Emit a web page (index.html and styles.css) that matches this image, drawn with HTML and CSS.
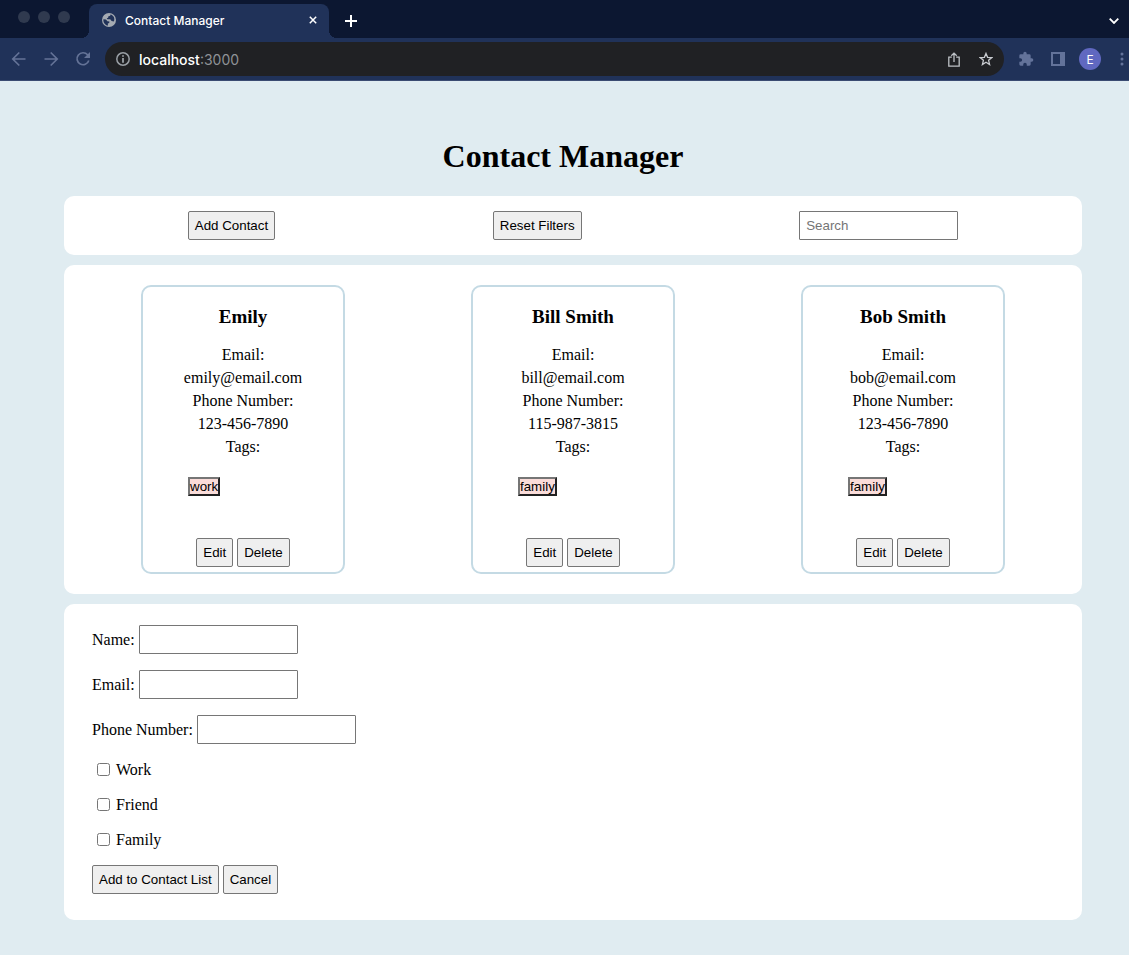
FILE: index.html
```html
<!DOCTYPE html>
<html lang="en">
<head>
<meta charset="utf-8">
<title>Contact Manager</title>
<link rel="stylesheet" href="styles.css">
</head>
<body>
<header class="browser">
  <div class="tabstrip">
    <div class="lights"><span class="light"></span><span class="light"></span><span class="light"></span></div>
    <div class="tab">
      <svg class="favicon" viewBox="0 0 14 14" width="14" height="14" aria-hidden="true"><circle cx="7" cy="7" r="7" fill="#a5abb3"/><path d="M1.4 6.2 L4 6.6 L5.4 8.2 L7.4 8.4 L7.2 10 L5.8 10.6 L6 12.6 C3.2 12.2 1 9.7 1.4 6.2Z M8.4 1.5 L8.2 2.8 L6.2 3.4 L6.2 4.8 L4.8 5.2 L5.4 6.2 L8.2 6.2 L9.6 8 L11.8 8.6 C13.300 5.400 11.600 2.200 8.400 1.500Z" fill="#203259"/></svg>
      <span class="tab-title">Contact Manager</span>
      <button class="icon" aria-label="Close tab"><svg width="8" height="8" viewBox="0 0 8 8"><path d="M.8 .8 7.2 7.2 M7.2 .8 .8 7.2" stroke="#fff" stroke-width="1.5"/></svg></button>
    </div>
    <button class="icon new-tab" aria-label="New tab"><svg width="12" height="12" viewBox="0 0 12 12"><path d="M6 0V12 M0 6H12" stroke="#fff" stroke-width="2"/></svg></button>
    <button class="icon tab-search" aria-label="Search tabs"><svg width="10" height="6" viewBox="0 0 10 6"><path d="M.7 .7 5 5 9.3 .7" fill="none" stroke="#fff" stroke-width="1.8"/></svg></button>
  </div>
  <div class="toolbar">
    <nav class="history">
      <button class="icon" aria-label="Back"><svg width="16" height="16" viewBox="0 0 16 16"><path d="M14.5 8H2 M8.3 1.5 1.8 8 8.3 14.5" fill="none" stroke="#647397" stroke-width="1.7"/></svg></button>
      <button class="icon" aria-label="Forward"><svg width="16" height="16" viewBox="0 0 16 16"><path d="M1.5 8H14 M7.7 1.5 14.2 8 7.7 14.5" fill="none" stroke="#647397" stroke-width="1.7"/></svg></button>
      <button class="icon" aria-label="Reload"><svg width="16" height="16" viewBox="0 0 16 16"><path d="M13.8 9.5A6 6 0 1 1 12.6 3.8L14 5.2" fill="none" stroke="#647397" stroke-width="1.7"/><path d="M15 1V7H9Z" fill="#647397"/></svg></button>
    </nav>
    <div class="omnibox">
      <svg width="14" height="14" viewBox="0 0 14 14" aria-hidden="true"><circle cx="7" cy="7" r="6.2" fill="none" stroke="#9aa0a6" stroke-width="1.5"/><path d="M7 3.2V4.8 M7 6V10.8" stroke="#9aa0a6" stroke-width="1.8"/></svg>
      <span class="url"><span class="host">localhost</span>:3000</span>
      <button class="icon" aria-label="Share"><svg width="12" height="15" viewBox="0 0 12 15"><path d="M3.8 5.2H.8V14.200H11.200V5.200H8.200 M6 10V1.500 M3.300 3.800 6 1.100 8.700 3.800" fill="none" stroke="#bdc1c6" stroke-width="1.3"/></svg></button>
      <button class="icon" aria-label="Bookmark"><svg width="14" height="14" viewBox="0 0 14 14"><path d="M7 1.4 8.6 5.3 12.8 5.6 9.6 8.3 10.6 12.5 7 10.2 3.4 12.5 4.4 8.3 1.2 5.6 5.4 5.3Z" fill="none" stroke="#c8cbd0" stroke-width="1.3"/></svg></button>
    </div>
    <div class="actions">
      <button class="icon" aria-label="Extensions"><svg width="16" height="16" viewBox="0 0 24 24"><path d="M20.5 11H19V7a2 2 0 0 0-2-2h-4V3.500a2.500 2.500 0 0 0-5 0V5H4a2 2 0 0 0-2 2v3.800h1.500a2.700 2.700 0 0 1 0 5.400H2V20a2 2 0 0 0 2 2h3.800v-1.500a2.700 2.700 0 0 1 5.400 0V22H17a2 2 0 0 0 2-2v-4h1.500a2.500 2.500 0 0 0 0-5Z" fill="#63739a"/></svg></button>
      <button class="icon" aria-label="Side panel"><svg width="14" height="14" viewBox="0 0 14 14"><path d="M0 0H14V14H0Z M2 2V12H9V2Z" fill="#63739a" fill-rule="evenodd"/></svg></button>
      <button class="avatar" aria-label="Profile">E</button>
      <button class="icon menu" aria-label="Menu"><svg width="4" height="14" viewBox="0 0 4 14"><g fill="#63739a"><circle cx="2" cy="2" r="1.5"/><circle cx="2" cy="7" r="1.5"/><circle cx="2" cy="12" r="1.5"/></g></svg></button>
    </div>
  </div>
</header>
<main class="page">
  <h1 class="title">Contact Manager</h1>
  <div class="panels">
    <section class="panel filters">
      <button class="btn">Add Contact</button>
      <button class="btn">Reset Filters</button>
      <input class="field" type="text" placeholder="Search" aria-label="Search">
    </section>
    <section class="panel cards">
      <article class="card">
        <h2 class="name">Emily</h2>
        <p class="details">Email:<br>emily@email.com<br>Phone Number:<br>123-456-7890<br>Tags:</p>
        <div class="tags"><button class="tag">work</button></div>
        <div class="row"><button class="btn">Edit</button><button class="btn">Delete</button></div>
      </article>
      <article class="card">
        <h2 class="name">Bill Smith</h2>
        <p class="details">Email:<br>bill@email.com<br>Phone Number:<br>115-987-3815<br>Tags:</p>
        <div class="tags"><button class="tag">family</button></div>
        <div class="row"><button class="btn">Edit</button><button class="btn">Delete</button></div>
      </article>
      <article class="card">
        <h2 class="name">Bob Smith</h2>
        <p class="details">Email:<br>bob@email.com<br>Phone Number:<br>123-456-7890<br>Tags:</p>
        <div class="tags"><button class="tag">family</button></div>
        <div class="row"><button class="btn">Edit</button><button class="btn">Delete</button></div>
      </article>
    </section>
    <form class="panel form">
      <div class="line"><label for="name">Name:</label><input class="field" id="name" type="text"></div>
      <div class="line"><label for="email">Email:</label><input class="field" id="email" type="text"></div>
      <div class="line"><label for="phone">Phone Number:</label><input class="field" id="phone" type="text"></div>
      <label class="check"><input class="box" type="checkbox">Work</label>
      <label class="check"><input class="box" type="checkbox">Friend</label>
      <label class="check"><input class="box" type="checkbox">Family</label>
      <div class="line"><button class="btn" type="button">Add to Contact List</button><button class="btn" type="button">Cancel</button></div>
    </form>
  </div>
</main>
</body>
</html>
```
FILE: styles.css
```css
* { box-sizing: border-box; }
body {
  margin: 0;
  background: #e0ecf1;
  color: #000;
  font: 16px "Liberation Serif", "Times New Roman", serif;
}
svg { display: block; flex: none; }

/* Browser window */
.browser {
  background: #203259;
  border-bottom: 1px solid #3a4b72;
  font-family: Inter, sans-serif;
}
.tabstrip {
  display: flex;
  align-items: center;
  height: 38px;
  padding-right: 10px;
  background: #0c1731;
}
.lights {
  display: flex;
  gap: 8px;
  width: 89px;
  padding: 0 0 4px 18px;
}
.light {
  width: 12px;
  height: 12px;
  border-radius: 50%;
  background: #303a4f;
}
.tab {
  display: flex;
  align-items: center;
  align-self: flex-end;
  gap: 9px;
  width: 240px;
  height: 34px;
  padding: 0 12px 2px 13px;
  border-radius: 8px 8px 0 0;
  background: #203259;
  color: #fff;
  font-size: 12px;
  font-weight: 500;
  position: relative;
}
.tab::before, .tab::after {
  content: "";
  position: absolute;
  bottom: 0;
  width: 8px;
  height: 8px;
}
.tab::before {
  right: 100%;
  background: radial-gradient(circle at 0 0, transparent 8px, #203259 8px);
}
.tab::after {
  left: 100%;
  background: radial-gradient(circle at 100% 0, transparent 8px, #203259 8px);
}
.tab-title { flex: 1; }
.icon {
  display: flex;
  padding: 0;
  border: 0;
  background: none;
}
.new-tab { margin: 4px 0 0 16px; }
.tab-search { margin: 4px 0 0 auto; }
.toolbar {
  display: flex;
  align-items: center;
  height: 42px;
  padding-left: 11px;
}
.history {
  display: flex;
  gap: 16px;
  width: 94px;
}
.omnibox {
  display: flex;
  flex: 1;
  align-items: center;
  gap: 19px;
  height: 34px;
  padding: 0 11px;
  border-radius: 17px;
  background: #202124;
  color: #8f9296;
  font-size: 14px;
}
.url { flex: 1; margin-left: -10px; }
.host { color: #fff; font-weight: 500; }
.actions {
  display: flex;
  align-items: center;
  gap: 17px;
  margin-left: 14px;
  padding-right: 5px;
}
.avatar {
  width: 22px;
  height: 22px;
  margin-left: -3px;
  padding: 0;
  border: 0;
  border-radius: 50%;
  background: #6068c0;
  color: #fff;
  font: 12px Inter, sans-serif;
}
.menu { margin-left: 2px; }

/* Page */
.page { padding: 57px 47px 35px 64px; }
.title {
  margin: 0 20px 21px 0;
  font-size: 32px;
  line-height: 37px;
  text-align: center;
}
.panels {
  display: grid;
  gap: 10px;
}
.panel {
  border-radius: 10px;
  background: #fff;
}
.filters {
  display: flex;
  justify-content: space-around;
  padding: 15px;
}
.cards {
  display: flex;
  justify-content: space-around;
  padding: 20px 14px;
}
.card {
  width: 204px;
  padding: 19px 5px 5px;
  border: 2px solid #c4dae4;
  border-radius: 10px;
  text-align: center;
}
.name {
  margin: 0 0 15px;
  font-size: 19px;
  line-height: 22px;
}
.details {
  margin: 0 0 19px;
  line-height: 23px;
}
.tags {
  display: flex;
  padding-left: 40px;
  margin-bottom: 42px;
}
.tag {
  padding: 0;
  border: 2px solid;
  border-color: #767676 #212121 #212121 #767676;
  background: #fadcd9;
  color: #000;
  font-family: "Liberation Sans", Arial, sans-serif;
}
.row {
  display: flex;
  justify-content: center;
  gap: 4px;
}
.btn, .field {
  height: 29px;
  padding: 0 6px;
  border: 1px solid #767676;
  color: #000;
  font-family: "Liberation Sans", Arial, sans-serif;
}
.btn {
  border-radius: 2px;
  background: #efefef;
}
.field {
  width: 159px;
  border-radius: 1px;
  background: #fff;
}
.field::placeholder { color: #757575; }
.form {
  display: grid;
  justify-items: start;
  gap: 16px;
  padding: 21px 28px 26px;
}
.line {
  display: flex;
  align-items: center;
  gap: 4px;
}
.check {
  display: flex;
  align-items: center;
  gap: 6px;
  line-height: 19px;
}
.box {
  width: 13px;
  height: 13px;
  margin: 0 0 0 5px;
}
```
